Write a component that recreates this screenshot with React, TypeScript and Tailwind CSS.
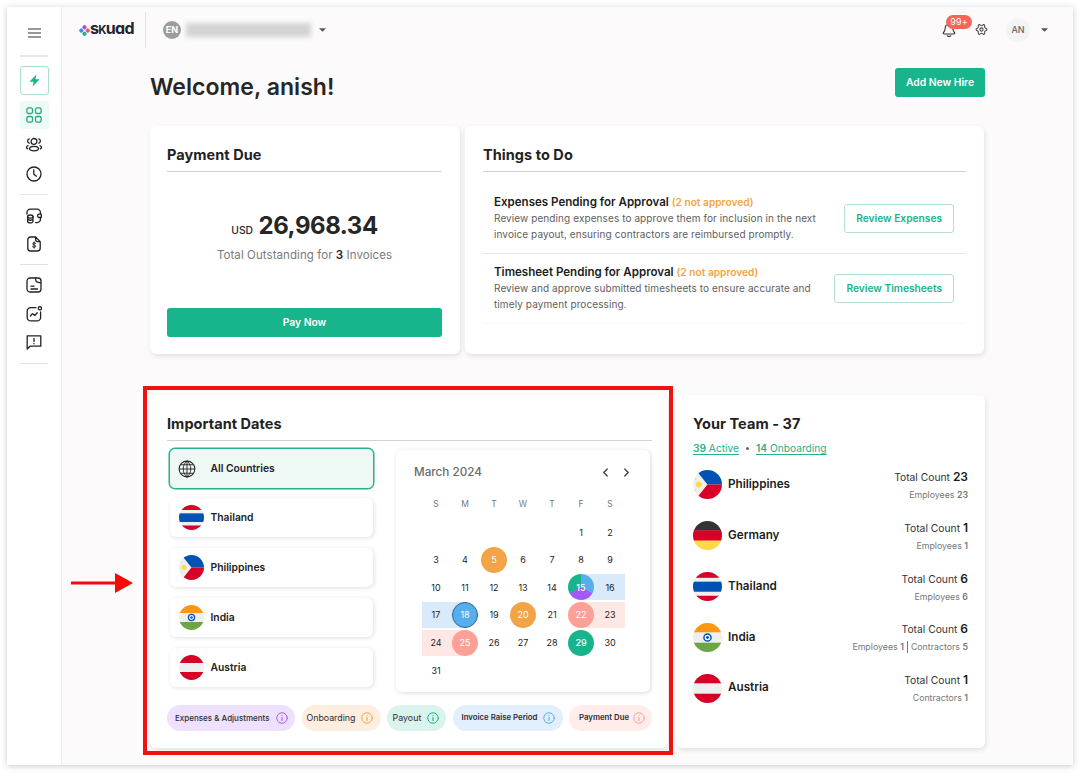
import type { ReactNode } from "react";
import { Settings } from "lucide-react";

type Country = "Thailand" | "Philippines" | "India" | "Austria" | "Germany";

const team: { country: Country; total: number; parts: [string, number][] }[] = [
  { country: "Philippines", total: 23, parts: [["Employees", 23]] },
  { country: "Germany", total: 1, parts: [["Employees", 1]] },
  { country: "Thailand", total: 6, parts: [["Employees", 6]] },
  { country: "India", total: 6, parts: [["Employees", 1], ["Contractors", 5]] },
  { country: "Austria", total: 1, parts: [["Contractors", 1]] },
];

const countries: Country[] = ["Thailand", "Philippines", "India", "Austria"];

const weeks: (number | null)[][] = [
  [null, null, null, null, null, 1, 2],
  [3, 4, 5, 6, 7, 8, 9],
  [10, 11, 12, 13, 14, 15, 16],
  [17, 18, 19, 20, 21, 22, 23],
  [24, 25, 26, 27, 28, 29, 30],
  [31, null, null, null, null, null, null],
];

const dayDots: Record<number, string> = {
  5: "bg-[#f3a446] text-white",
  15: "bg-[conic-gradient(#56aeec_0_33%,#a259f7_33%_67%,#18b48c_67%)] text-white font-medium",
  18: "bg-[#56aeec] text-white border border-[#2f6591]",
  20: "bg-[#f3a446] text-white",
  22: "bg-[#fe9f98] text-white",
  25: "bg-[#fe9f98] text-white",
  29: "bg-[#18b48c] text-white font-medium",
};

const dayBands: Record<number, string> = {
  15: "bg-[linear-gradient(90deg,transparent_50%,#d9eafa_50%)]",
  16: "bg-[#d9eafa]",
  17: "bg-[#d9eafa]",
  18: "bg-[linear-gradient(90deg,#d9eafa_50%,transparent_50%)]",
  22: "bg-[linear-gradient(90deg,transparent_50%,#ffe7e5_50%)]",
  23: "bg-[#ffe7e5]",
  24: "bg-[#ffe7e5]",
  25: "bg-[linear-gradient(90deg,#ffe7e5_50%,transparent_50%)]",
};

function Flag({ country, className }: { country: Country; className: string }) {
  return (
    <svg viewBox="0 0 30 30" className={`shrink-0 overflow-hidden rounded-full ${className}`}>
      <rect width="30" height="30" fill="#efefef" />
      {country === "Thailand" && (
        <>
          <rect width="30" height="6" fill="#d80027" />
          <rect y="10" width="30" height="10.4" fill="#0052b4" />
          <rect y="24.6" width="30" height="6" fill="#d80027" />
        </>
      )}
      {country === "Philippines" && (
        <>
          <path d="M3 0H30V15H15Z" fill="#0052b4" />
          <path d="M3 30H30V15H15Z" fill="#d80027" />
          <circle cx="6" cy="15" r="3" fill="#ffda44" />
          <circle cx="2.6" cy="9.5" r="0.8" fill="#ffda44" />
          <circle cx="2.6" cy="20.5" r="0.8" fill="#ffda44" />
        </>
      )}
      {country === "India" && (
        <>
          <rect width="30" height="9.6" fill="#ff9811" />
          <rect y="20.4" width="30" height="9.6" fill="#6da544" />
          <circle cx="15" cy="15" r="3.7" fill="#fff" stroke="#0052b4" strokeWidth="1.5" />
          <circle cx="15" cy="15" r="1.5" fill="#0052b4" />
        </>
      )}
      {country === "Austria" && (
        <>
          <rect width="30" height="9.6" fill="#d80027" />
          <rect y="20.4" width="30" height="9.6" fill="#d80027" />
        </>
      )}
      {country === "Germany" && (
        <>
          <rect width="30" height="10" fill="#333" />
          <rect y="9.7" width="30" height="10.7" fill="#d80027" />
          <rect y="20.4" width="30" height="9.6" fill="#ffda44" />
        </>
      )}
    </svg>
  );
}

function Icon({ children, className = "size-4" }: { children: ReactNode; className?: string }) {
  return (
    <svg
      viewBox="0 0 16 16"
      fill="none"
      stroke="currentColor"
      strokeWidth="1.3"
      strokeLinecap="round"
      strokeLinejoin="round"
      className={`shrink-0 ${className}`}
    >
      {children}
    </svg>
  );
}

function Caret() {
  return (
    <svg viewBox="0 0 8 4" className="h-1 w-[7px] shrink-0 fill-[#555]">
      <path d="M0 0H8L4 4Z" />
    </svg>
  );
}

function Sidebar() {
  return (
    <aside className="flex w-[55px] shrink-0 flex-col items-center border-r border-[#eeecee] bg-white text-[#222]">
      <div className="flex h-[50px] w-7 items-center justify-center border-b-2 border-[#e6e6e6] pt-1">
        <svg viewBox="0 0 13 10" className="h-2.5 w-[13px] stroke-[#777]" strokeWidth="1.4">
          <path d="M0 1H13M0 5H13M0 9H13" />
        </svg>
      </div>
      <div className="mt-[9px] flex h-[29px] w-[29px] items-center justify-center rounded-[3px] border border-[#a8dfd0]">
        <svg viewBox="0 0 10 12" className="h-[13px] w-[11px] fill-[#18b48c]">
          <path d="M6.8 0.4 0.3 7.2H4.1L3.3 11.6 9.7 4.8H5.9Z" />
        </svg>
      </div>
      <div className="mt-[6px] flex h-[28px] w-[29px] items-center justify-center rounded-[3px] bg-[#eefaf6] text-[#27a584]">
        <Icon>
          <rect x="0.9" y="0.9" width="5.6" height="5.6" rx="1.6" />
          <rect x="9.5" y="0.9" width="5.6" height="5.6" rx="1.6" />
          <rect x="0.9" y="9.5" width="5.6" height="5.6" rx="1.6" />
          <rect x="9.5" y="9.5" width="5.6" height="5.6" rx="1.6" />
        </Icon>
      </div>
      <div className="mt-[8px] flex h-[58px] w-7 flex-col items-center justify-between border-b border-[#e6e6e6] pb-3">
        <Icon>
          <circle cx="8" cy="4.4" r="2.9" />
          <ellipse cx="8" cy="11.6" rx="4.5" ry="2.3" />
          <path d="M3.3 1.8A2.3 2.3 0 0 0 3.2 6.2M12.7 1.8A2.3 2.3 0 0 1 12.8 6.2M2.1 8.7C.2 9.2.1 11 1.7 11.8M13.9 8.7C15.8 9.2 15.9 11 14.3 11.8" />
        </Icon>
        <Icon>
          <circle cx="8" cy="8" r="7" />
          <path d="M7.8 3.8V8.2L10.4 10.2" />
        </Icon>
      </div>
      <div className="flex h-[70px] w-7 flex-col items-center justify-between border-b border-[#e2e2e2] pt-[13px] pb-3">
        <Icon>
          <path d="M1 6V4.5A3.2 3.2 0 0 1 4.2 1.2H11.2A3.2 3.2 0 0 1 14.4 4.4V5.4M14.4 10V11.4A3.2 3.2 0 0 1 11.2 14.6H9.6M15.3 6.2H13.2A1.6 1.6 0 0 0 13.2 9.5H15.3Z" />
          <ellipse cx="4.3" cy="8.6" rx="2.7" ry="1.6" />
          <path d="M1.6 8.6V13.2C1.6 15.5 7 15.5 7 13.2V8.6M1.6 11.2C2.6 12.6 6 12.6 7 11.2" />
        </Icon>
        <Icon>
          <path d="M9.4 1H4.6A2.8 2.8 0 0 0 1.8 3.8V12.2A2.8 2.8 0 0 0 4.6 15H11.4A2.8 2.8 0 0 0 14.2 12.2V5.6L9.6 1V3.6C9.6 5 10.2 5.6 11.6 5.6H14" />
          <path
            d="M9.7 7.3C8.9 6.4 6.7 6.5 6.7 7.9 6.7 9.4 9.7 8.6 9.7 10.2 9.7 11.6 7.2 11.6 6.4 10.7M8.1 5.9V12.1"
            strokeWidth="1"
          />
        </Icon>
      </div>
      <div className="flex h-[99px] w-7 flex-col items-center justify-between border-b border-[#e2e2e2] pt-3 pb-[13px]">
        <Icon>
          <rect x="1" y="1" width="14" height="14" rx="3" />
          <path d="M9.5 1.2C9.6 4.7 10.6 5.7 14.8 5.8M5 9.2H8M5 12H11.5" />
        </Icon>
        <Icon>
          <path d="M10 1.6H4.6A3.4 3.4 0 0 0 1.2 5V11.4A3.4 3.4 0 0 0 4.6 14.9H11.2A3.4 3.4 0 0 0 14.6 11.4V6" />
          <circle cx="13.9" cy="2.2" r="1.6" />
          <path d="M4.4 10 6.4 7.6 8.8 9.5 11.2 6.8" />
        </Icon>
        <Icon>
          <path d="M1.2 15V1.8H14.8V12.2H4Z" />
          <path d="M8 4.4V7.4M8 9.4V9.8" />
        </Icon>
      </div>
    </aside>
  );
}

function Header() {
  return (
    <header className="flex h-[46px] items-center pl-[17px]">
      <div className="flex w-[55px] items-center">
        <svg viewBox="0 0 12 12" className="size-[11px] shrink-0">
          <rect x="3.9" y="0.4" width="4.2" height="4.2" rx="1.6" fill="#9b51e0" transform="rotate(45 6 2.5)" />
          <rect x="0.4" y="3.9" width="4.2" height="4.2" rx="1.6" fill="#3f8cf0" transform="rotate(45 2.5 6)" />
          <rect x="7.4" y="3.9" width="4.2" height="4.2" rx="1.6" fill="#f0566a" transform="rotate(45 9.5 6)" />
          <rect x="3.9" y="7.4" width="4.2" height="4.2" rx="1.6" fill="#18b48c" transform="rotate(45 6 9.5)" />
        </svg>
        <span className="-mt-0.5 text-[16px] leading-5 font-bold tracking-[-0.7px] text-[#25252f] [font-feature-settings:'cv11']">
          s<span className="text-[11.5px] uppercase">k</span>uad
        </span>
      </div>
      <div className="ml-[11px] h-9 w-px bg-[#e6e3e4]" />
      <div className="ml-[17px] flex size-[18px] items-center justify-center rounded-full bg-[#9d9d9d] text-[9px] font-bold text-white">
        EN
      </div>
      <div className="ml-[5px] h-[14px] w-[125px] bg-[#d3d3d3] blur-[2.5px]" />
      <div className="ml-[8px]">
        <Caret />
      </div>
      <div className="mr-[25px] ml-auto flex items-center">
        <div className="relative">
          <Icon className="size-[14px] text-[#333]">
            <path d="M8 1.6C5 1.6 3.6 3.8 3.6 6.2 3.6 9 2.2 9.6 1.6 11.2 1.2 12.2 1.8 12.6 2.6 12.6H13.4C14.2 12.6 14.8 12.2 14.4 11.2 13.8 9.6 12.4 9 12.4 6.2M6 14.6C7 15.4 9 15.4 10 14.6" />
          </Icon>
          <span className="absolute -top-2 left-1 flex h-[14px] w-[26px] items-center justify-center rounded-full bg-[#fb6457] text-[9px] tracking-[0.2px] text-white">
            99+
          </span>
        </div>
        <Settings className="-mt-px ml-[19px] size-[13px] rotate-90 text-[#444]" strokeWidth={1.9} />
        <div className="mr-[11px] ml-[18px] flex size-6 items-center justify-center rounded-full bg-[#f4f4f6] text-[9px] font-medium text-[#666]">
          AN
        </div>
        <Caret />
      </div>
    </header>
  );
}

function CardTitle({ children }: { children: ReactNode }) {
  return (
    <h2 className="flex h-[46px] items-end border-b border-[#d2d2d2] pb-[6px] text-[14.5px] leading-5 font-bold tracking-[0.05px] text-[#222]">
      {children}
    </h2>
  );
}

function PaymentDue() {
  return (
    <section className="flex h-[228px] w-[310px] flex-col rounded-md bg-white pr-[18px] pl-[17px] shadow-[1px_2px_5px_rgba(0,0,0,0.11)]">
      <CardTitle>Payment Due</CardTitle>
      <div className="mt-[37px] text-center leading-[34px] text-[#262626]">
        <span className="text-[10.3px] font-medium">USD</span>{" "}
        <span className="ml-px text-[24px] font-bold tracking-[-0.45px]">26,968.34</span>
      </div>
      <p className="text-center text-[11.5px] leading-4 tracking-[0.07px] text-[#7a7a7a]">
        Total Outstanding for <b className="font-semibold text-[#222]">3</b> Invoices
      </p>
      <button className="mt-auto mb-[17px] h-[29px] rounded-[3px] bg-[#18b48c] text-[10.3px] font-semibold text-white">
        Pay Now
      </button>
    </section>
  );
}

function Task({ title, text, action }: { title: string; text: string; action: string }) {
  return (
    <div className="flex h-[70px] justify-between border-b border-[#e6e6e6] pr-3 pl-[11px] last:border-[#f6f6f6]">
      <div className="w-[326px] pt-[11px]">
        <h3 className="text-[11.55px] leading-[15px] font-semibold whitespace-nowrap text-[#1c1c1c]">
          {title} <span className="text-[10.2px] text-[#f3a446]">(2 not approved)</span>
        </h3>
        <p className="text-[10px] leading-4 tracking-[0.09px] text-[#5e5e5e]">{text}</p>
      </div>
      <button className="mt-[20px] h-[29px] rounded-[3px] border border-[#b3e0d5] px-[11px] text-[10.2px] font-semibold text-[#18b48c]">
        {action}
      </button>
    </div>
  );
}

function ThingsToDo() {
  return (
    <section className="h-[228px] w-[519px] rounded-md bg-white px-[18px] shadow-[1px_2px_5px_rgba(0,0,0,0.11)]">
      <CardTitle>Things to Do</CardTitle>
      <div className="pt-[12px]">
        <Task
          title="Expenses Pending for Approval"
          text="Review pending expenses to approve them for inclusion in the next invoice payout, ensuring contractors are reimbursed promptly."
          action="Review Expenses"
        />
        <Task
          title="Timesheet Pending for Approval"
          text="Review and approve submitted timesheets to ensure accurate and timely payment processing."
          action="Review Timesheets"
        />
      </div>
    </section>
  );
}

function Calendar() {
  return (
    <div className="flex h-[242px] w-[254px] flex-col items-center rounded-md bg-white shadow-[1px_1px_5px_rgba(0,0,0,0.14)]">
      <div className="flex h-[45px] w-full items-center pr-[18px] pl-[18px] text-[11.7px] font-medium text-[#6a6a6a]">
        March 2024
        <Icon className="ml-auto size-[11px] text-[#444]">
          <path d="M10.5 3 5.5 8 10.5 13" strokeWidth="2" />
        </Icon>
        <Icon className="ml-[10px] size-[11px] text-[#444]">
          <path d="M5.5 3 10.5 8 5.5 13" strokeWidth="2" />
        </Icon>
      </div>
      <div className="grid w-[203px] grid-cols-7 pt-[1.5px] text-center text-[8.5px] leading-[14px] text-[#777]">
        {["S", "M", "T", "W", "T", "F", "S"].map((d, i) => (
          <span key={i}>{d}</span>
        ))}
      </div>
      <div className="mt-[8.8px] flex w-[203px] flex-col gap-[1.6px]">
        {weeks.map((week, i) => (
          <div key={i} className="grid grid-cols-7">
            {week.map((day, j) => (
              <div key={j} className={`flex h-[26px] justify-center ${day ? (dayBands[day] ?? "") : ""}`}>
                {day && (
                  <span
                    className={`flex size-[26px] items-center justify-center rounded-full text-[9px] ${dayDots[day] ?? "text-[#222]"}`}
                  >
                    {day}
                  </span>
                )}
              </div>
            ))}
          </div>
        ))}
      </div>
    </div>
  );
}

function Legend({ label, className, iconClass }: { label: string; className: string; iconClass: string }) {
  return (
    <div className={`flex h-[26px] shrink-0 items-center justify-between rounded-full pr-[7.5px] whitespace-nowrap text-[#2c2c36] ${className}`}>
      {label}
      <Icon className={`size-3 ${iconClass}`}>
        <circle cx="8" cy="8" r="7" />
        <path d="M8 7.4V11.4M8 4.6V4.8" strokeWidth="1.5" />
      </Icon>
    </div>
  );
}

function ImportantDates() {
  return (
    <section className="relative h-[353px] w-[518px] rounded-md bg-white pr-4 pl-[17px] shadow-[1px_2px_5px_rgba(0,0,0,0.11)]">
      <CardTitle>Important Dates</CardTitle>
      <div className="flex justify-between pt-[7px] pr-[2px] pl-[2px]">
        <div className="flex flex-col gap-[11px] text-[10.3px] font-semibold text-[#222]">
          <div className="-mb-0.5 flex h-[41px] w-[205px] items-center rounded-md border-[1.5px] border-[#27b08c] bg-[#eef9f6] pl-[8px] ring-[0.5px] ring-[#27b08c]">
            <Icon className="size-[18px] text-[#222]">
              <circle cx="8" cy="8" r="7" strokeWidth="0.9" />
              <path
                d="M8 1V15M1 8H15M2.4 4.2H13.6M2.4 11.8H13.6M8 1C3.4 4 3.4 12 8 15M8 1C12.6 4 12.6 12 8 15"
                strokeWidth="0.8"
              />
            </Icon>
            <span className="ml-[14.5px]">All Countries</span>
          </div>
          {countries.map((c) => (
            <div
              key={c}
              className="ml-px flex h-[39px] w-[203px] items-center rounded-md bg-white pl-[9px] shadow-[1px_1px_4px_rgba(0,0,0,0.13)]"
            >
              <Flag country={c} className="size-[25px]" />
              <span className="ml-[6.5px]">{c}</span>
            </div>
          ))}
        </div>
        <div className="pt-[2px]">
          <Calendar />
        </div>
      </div>
      <div className="mt-[13px] flex gap-[6.5px]">
        <Legend label="Expenses & Adjustments" className="w-[128px] bg-[#ede1fd] pl-2 text-[8px] font-medium" iconClass="text-[#a259f7]" />
        <Legend label="Onboarding" className="w-[79px] bg-[#fdeee0] pl-[5px] text-[8.8px]" iconClass="text-[#f3a446]" />
        <Legend label="Payout" className="w-[59px] bg-[#daf3ec] pl-[5.5px] text-[8.9px]" iconClass="text-[#18b48c]" />
        <Legend label="Invoice Raise Period" className="w-[110px] bg-[#e2effc] pl-[9px] text-[7.8px] font-semibold" iconClass="text-[#56aeec]" />
        <Legend label="Payment Due" className="w-[83px] bg-[#ffeceb] pl-[10px] text-[7.8px] font-semibold" iconClass="text-[#fe9f98]" />
      </div>
      <div className="absolute -top-[9px] -left-[7px] h-[369px] w-[530px] border-4 border-[#f01010]" />
      <svg viewBox="0 0 62 20" className="absolute top-[177.5px] -left-[79px] h-5 w-[62px]">
        <path d="M0 10H46" stroke="#f90808" strokeWidth="3" />
        <path d="M44 0 62 10 44 20Z" fill="#f90808" />
      </svg>
    </section>
  );
}

function YourTeam() {
  return (
    <section className="h-[353px] w-[309px] rounded-md bg-white px-[17px] shadow-[1px_2px_5px_rgba(0,0,0,0.11)]">
      <h2 className="pt-[19px] text-[14.5px] leading-5 font-bold tracking-[0.05px] text-[#222]">Your Team - 37</h2>
      <p className="mt-[6px] flex items-center text-[10.2px] leading-4 text-[#27b08c]">
        <span className="underline underline-offset-2">
          <b className="font-semibold">39</b> Active
        </span>
        <span className="mx-[7px] size-[3px] rounded-full bg-[#666]" />
        <span className="underline underline-offset-2">
          <b className="font-semibold">14</b> Onboarding
        </span>
      </p>
      <ul className="mt-[3.6px]">
        {team.map((t) => (
          <li key={t.country} className="flex h-[50.8px] items-center">
            <Flag country={t.country} className="size-[29px]" />
            <span className="ml-[6px] text-[11.7px] font-semibold text-[#1c1c1c]">{t.country}</span>
            <div className="ml-auto pt-px text-right">
              <p className="text-[10.3px] leading-[18px] text-[#333]">
                Total Count <b className="text-[12px] font-semibold text-[#1c1c1c]">{t.total}</b>
              </p>
              <p className="flex justify-end text-[8.8px] leading-[17px] text-[#777]">
                {t.parts.map(([kind, n], i) => (
                  <span key={kind} className={i > 0 ? "ml-[3px] flex items-center before:mr-[3px] before:h-3 before:w-px before:bg-[#777]" : ""}>
                    <span>
                      {kind} <b className="font-semibold">{n}</b>
                    </span>
                  </span>
                ))}
              </p>
            </div>
          </li>
        ))}
      </ul>
    </section>
  );
}

export default function App() {
  return (
    <div className="h-[776px] w-[1080px] overflow-hidden bg-white p-[7px] font-[Inter,sans-serif]">
      <div className="flex h-[758px] w-[1066px] bg-[#fcfafb] shadow-[0_1px_6px_rgba(60,80,90,0.3)]">
        <Sidebar />
        <div className="flex-1">
          <Header />
          <main className="ml-[88px] w-[835px]">
            <div className="flex items-start justify-between pt-[15px]">
              <h1 className="pt-1 text-[23px] leading-[30px] font-semibold tracking-[0.05px] text-[#262626]">
                Welcome, anish!
              </h1>
              <button className="h-[29px] w-[90px] rounded-[3px] bg-[#18b48c] text-[10.3px] font-semibold text-white">
                Add New Hire
              </button>
            </div>
            <div className="mt-[24px] flex gap-[5px]">
              <PaymentDue />
              <ThingsToDo />
            </div>
            <div className="mt-[41px] flex justify-between">
              <ImportantDates />
              <YourTeam />
            </div>
          </main>
        </div>
      </div>
    </div>
  );
}
